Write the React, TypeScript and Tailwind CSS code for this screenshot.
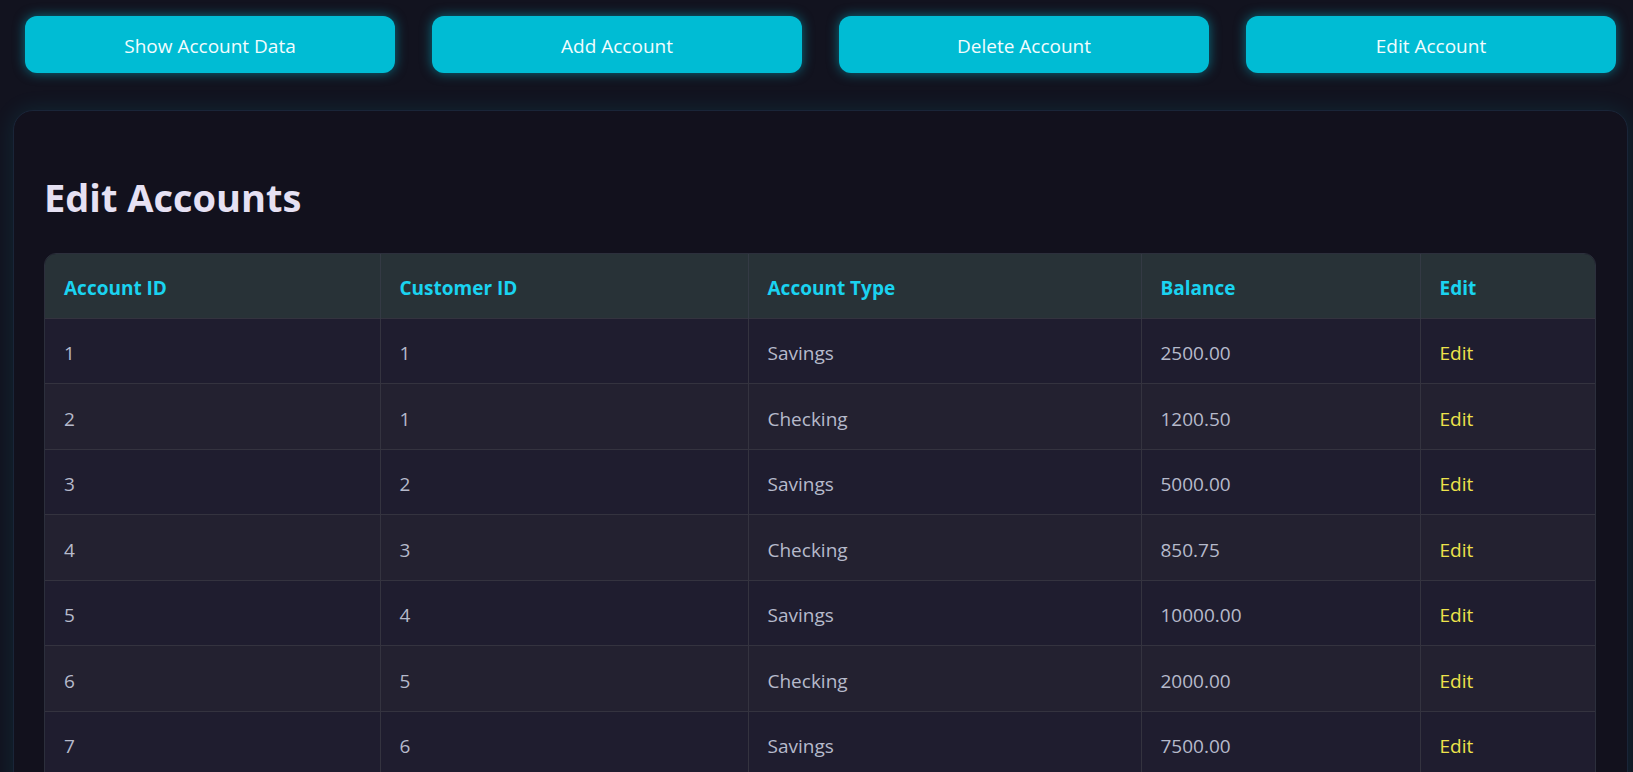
import React from "react";

const buttons = ["Show Account Data", "Add Account", "Delete Account", "Edit Account"];

const accounts = [
  { id: 1, customer: 1, type: "Savings", balance: "2500.00" },
  { id: 2, customer: 1, type: "Checking", balance: "1200.50" },
  { id: 3, customer: 2, type: "Savings", balance: "5000.00" },
  { id: 4, customer: 3, type: "Checking", balance: "850.75" },
  { id: 5, customer: 4, type: "Savings", balance: "10000.00" },
  { id: 6, customer: 5, type: "Checking", balance: "2000.00" },
  { id: 7, customer: 6, type: "Savings", balance: "7500.00" },
  { id: 8, customer: 7, type: "Checking", balance: "3200.25" },
];

export default function App() {
  return (
    <div
      className="min-h-screen bg-[#12131f] pt-[16px] overflow-hidden"
      style={{ fontFamily: '"Open Sans", "Noto Sans", sans-serif' }}
    >
      <div className="flex gap-[37px] pl-[25px] pr-[17px]">
        {buttons.map((label) => (
          <button
            key={label}
            className="flex-1 h-[57px] pt-[3px] rounded-[12px] bg-[#00bcd4] text-[19px] text-[#f2fcfe] shadow-[0_0_12px_rgba(0,188,212,0.55)]"
          >
            {label}
          </button>
        ))}
      </div>

      <div className="ml-[13px] mr-[5px] mt-[37px] rounded-[20px] border border-[#1a2538] bg-[#12111d] shadow-[0_0_22px_rgba(0,188,212,0.12)] pl-[30px] pr-[31px] pt-[62px] pb-[40px]">
        <h2 className="text-[38px] leading-[48px] font-bold text-[#e6e1f3] mb-[32px]">
          Edit Accounts
        </h2>

        <div className="rounded-t-[12px] overflow-hidden border border-[#2c2f3c]">
          <table className="w-full table-fixed border-collapse text-left">
            <colgroup>
              <col className="w-[335px]" />
              <col className="w-[368px]" />
              <col className="w-[393px]" />
              <col className="w-[279px]" />
              <col />
            </colgroup>
            <thead>
              <tr className="bg-[#283237]">
                {["Account ID", "Customer ID", "Account Type", "Balance", "Edit"].map((h, i) => (
                  <th
                    key={h}
                    className={`h-[64px] px-[19px] pt-[5px] text-[19px] font-bold text-[#1ad3f0] ${
                      i > 0 ? "border-l border-[#343a44]" : ""
                    }`}
                  >
                    {h}
                  </th>
                ))}
              </tr>
            </thead>
            <tbody>
              {accounts.map((a, idx) => (
                <tr
                  key={a.id}
                  className={`border-t border-[#34333f] ${idx % 2 === 0 ? "bg-[#1f1d2f]" : "bg-[#232130]"}`}
                >
                  <td className="h-[65.5px] px-[19px] pt-[5px] text-[19px] text-[#b6bacb]">{a.id}</td>
                  <td className="h-[65.5px] px-[19px] pt-[5px] text-[19px] text-[#b6bacb] border-l border-[#34333f]">
                    {a.customer}
                  </td>
                  <td className="h-[65.5px] px-[19px] pt-[5px] text-[19px] text-[#b6bacb] border-l border-[#34333f]">
                    {a.type}
                  </td>
                  <td className="h-[65.5px] px-[19px] pt-[5px] text-[19px] text-[#b6bacb] border-l border-[#34333f]">
                    {a.balance}
                  </td>
                  <td className="h-[65.5px] px-[19px] pt-[5px] text-[19px] text-[#ede34b] border-l border-[#34333f]">
                    Edit
                  </td>
                </tr>
              ))}
            </tbody>
          </table>
        </div>
      </div>
    </div>
  );
}
